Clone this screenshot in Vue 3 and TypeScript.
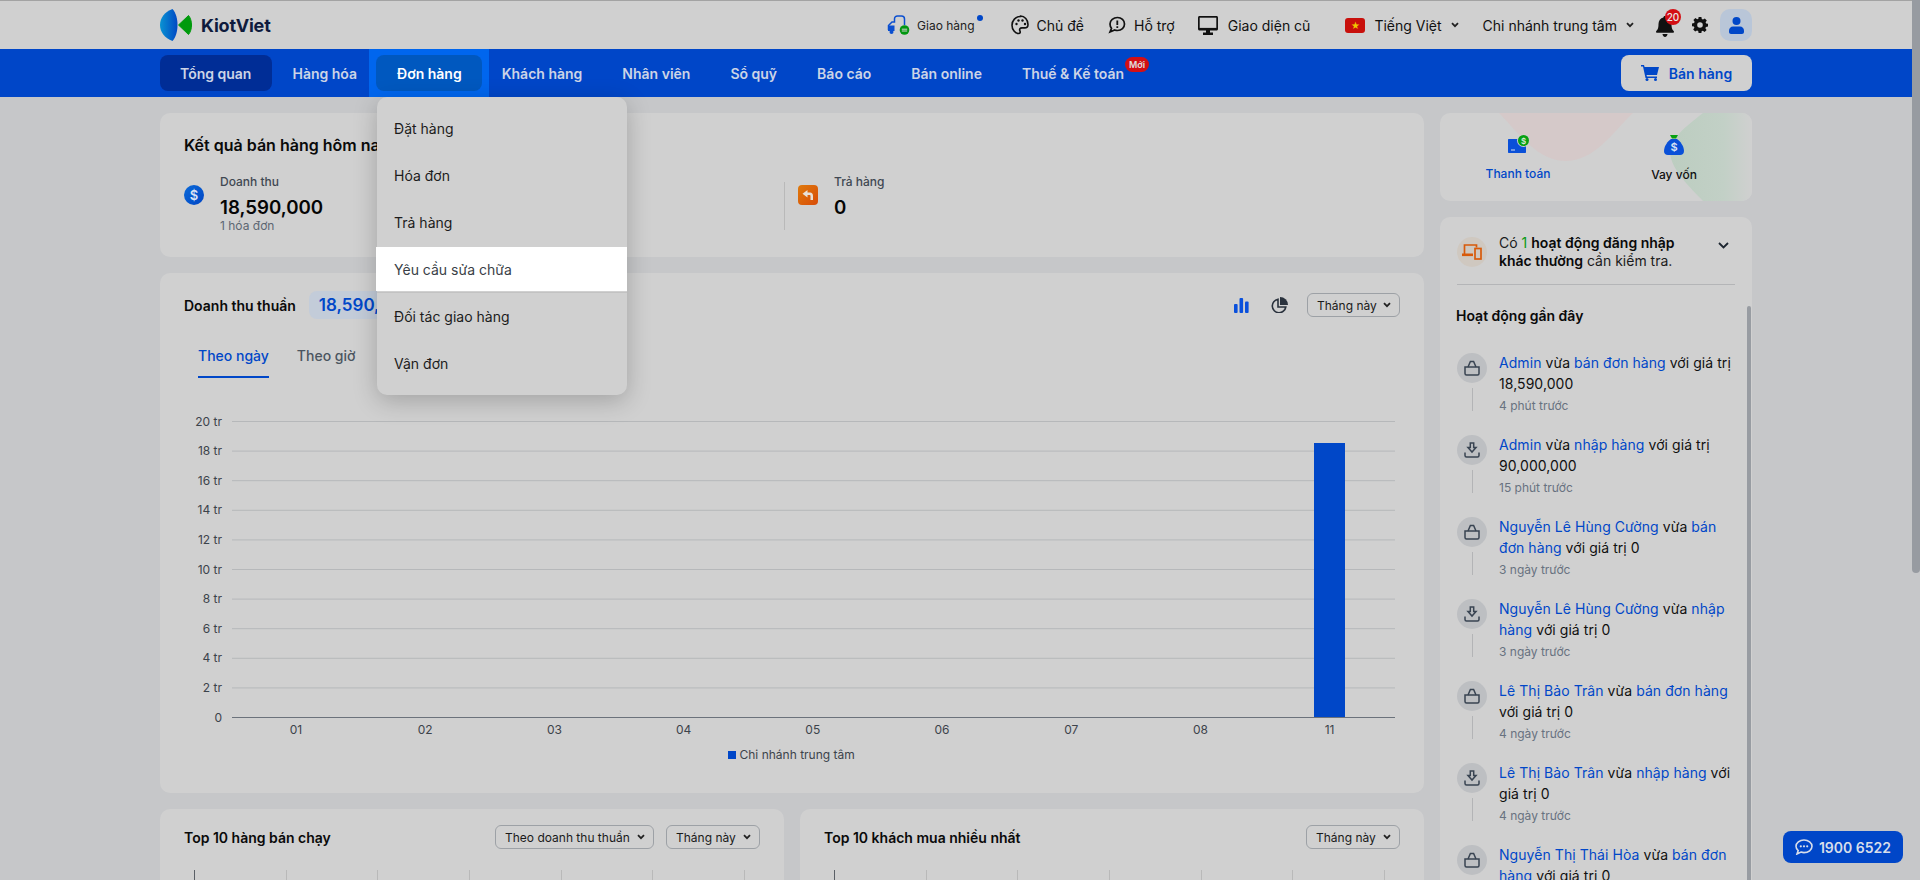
<script setup lang="ts">
interface Activity {
  name: string
  action: string
  tail: string
  value: string
  time: string
  kind: 'sell' | 'import'
}

const navItems = ['Tổng quan', 'Hàng hóa', 'Đơn hàng', 'Khách hàng', 'Nhân viên', 'Sổ quỹ', 'Báo cáo', 'Bán online', 'Thuế & Kế toán']
const menuItems = ['Đặt hàng', 'Hóa đơn', 'Trả hàng', 'Yêu cầu sửa chữa', 'Đối tác giao hàng', 'Vận đơn']

const activities: Activity[] = [
  { name: 'Admin', action: 'bán đơn hàng', tail: 'với giá trị', value: '18,590,000', time: '4 phút trước', kind: 'sell' },
  { name: 'Admin', action: 'nhập hàng', tail: 'với giá trị', value: '90,000,000', time: '15 phút trước', kind: 'import' },
  { name: 'Nguyễn Lê Hùng Cường', action: 'bán đơn hàng', tail: 'với giá trị', value: '0', time: '3 ngày trước', kind: 'sell' },
  { name: 'Nguyễn Lê Hùng Cường', action: 'nhập hàng', tail: 'với giá trị', value: '0', time: '3 ngày trước', kind: 'import' },
  { name: 'Lê Thị Bảo Trân', action: 'bán đơn hàng', tail: 'với giá trị', value: '0', time: '4 ngày trước', kind: 'sell' },
  { name: 'Lê Thị Bảo Trân', action: 'nhập hàng', tail: 'với giá trị', value: '0', time: '4 ngày trước', kind: 'import' },
  { name: 'Nguyễn Thị Thái Hòa', action: 'bán đơn hàng', tail: 'với giá trị', value: '0', time: '4 ngày trước', kind: 'sell' }
]

const yTicks = [20, 18, 16, 14, 12, 10, 8, 6, 4, 2].map((v, i) => ({ label: `${v} tr`, y: 14.5 + i * 29.6 }))
const xTicks = ['01', '02', '03', '04', '05', '06', '07', '08', '11'].map((label, i) => ({ label, x: 136 + i * 129.2 }))
const topTicks = [0, 1, 2, 3, 4, 5, 6]
</script>

<template>
  <div class="page">
    <header class="topbar">
      <div class="brand">
        <svg class="logo" viewBox="0 0 33 32" width="33" height="32">
          <defs>
            <linearGradient id="lg" x1="0" y1="0" x2="1" y2="0">
              <stop offset="0" stop-color="#0a93d2" />
              <stop offset="1" stop-color="#0048c4" />
            </linearGradient>
          </defs>
          <path d="M12.5 0C4.5 3 0 9 0 16s4.5 13 12.5 16C16 28 17.5 22 17.5 16S16 4 12.5 0Z" fill="url(#lg)" />
          <path d="M18.5 16 28.5 6.5C32.5 11 32.5 21 28.5 25.5Z" fill="#009a0c" stroke="#009a0c" stroke-linejoin="round" />
        </svg>
        <span class="brand-name">KiotViet</span>
      </div>

      <div class="tools">
        <a class="tool t-ship">
          <svg width="23" height="20" viewBox="0 0 23 20" fill="none">
            <path d="M1.500 15v-4.500L5 7h2.500V4C7.500 2.200 8.700 1 10.500 1h4C16.300 1 17.500 2.200 17.500 4v6" stroke="#0b4fd0" stroke-width="1.500" />
            <path d="M1 10.500h6.500V16H1Z" fill="#0b4fd0" />
            <circle cx="4.500" cy="17" r="2" fill="#0b4fd0" />
            <circle cx="17.500" cy="15" r="4.800" fill="#00960f" />
            <path d="M14.800 14.200h5.400M14.800 16h5.400" stroke="#d0d0d0" stroke-width="1" />
          </svg>
          <span class="ship-text">Giao hàng</span>
          <i class="ship-dot"></i>
        </a>
        <a class="tool t-theme">
          <svg width="18" height="20" viewBox="0 0 18 20" fill="none" stroke="#111" stroke-width="1.600">
            <path d="M9.500 1.500C4.500 1.500 1 5.500 1 10.200c0 4.600 3.200 8.300 6.600 8.300 1.700 0 1.900-1.400 1.300-2.600-.8-1.600.2-3 2-3h2.700c2 0 3.400-1.300 3.400-3.500 0-4.600-3.400-8.400-7.500-8.400Z" />
            <circle cx="5.500" cy="9" r="1.200" fill="#111" stroke="none" />
            <circle cx="7.500" cy="5.500" r="1.200" fill="#111" stroke="none" />
            <circle cx="11.500" cy="5.500" r="1.200" fill="#111" stroke="none" />
            <circle cx="14" cy="9" r="1.200" fill="#111" stroke="none" />
          </svg>
          <span>Chủ đề</span>
        </a>
        <a class="tool t-help">
          <svg width="18" height="18" viewBox="0 0 18 18" fill="none">
            <path d="M9.500 1.500c4 0 7 2.800 7 6.500s-3 6.500-7 6.500c-1 0-2-.2-2.800-.5L2 16l1.500-3.700C2.500 11.100 2 9.600 2 8c0-3.700 3.500-6.500 7.500-6.500Z" stroke="#111" stroke-width="1.700" />
            <path d="M9.300 4.500v4.500M9.300 10.300v1.700" stroke="#111" stroke-width="1.800" />
          </svg>
          <span>Hỗ trợ</span>
        </a>
        <a class="tool t-old">
          <svg width="20" height="19" viewBox="0 0 20 19">
            <path d="M1.500 0h17C19.300 0 20 .7 20 1.500V13c0 .8-.7 1.500-1.500 1.500h-17C.7 14.500 0 13.800 0 13V1.500C0 .7.700 0 1.500 0Z" fill="#111" />
            <path d="M1.700 1.700h16.600v10.200H1.700Z" fill="#d0d0d0" />
            <path d="M8 14h4v2.500h3V19H5v-2.500h3Z" fill="#111" />
          </svg>
          <span>Giao diện cũ</span>
        </a>
        <a class="tool t-lang">
          <span class="flag"><b>★</b></span>
          <span>Tiếng Việt</span>
          <svg class="chev" width="8" height="6" viewBox="0 0 8 6" fill="none"><path d="M1 1.200 4 4.200 7 1.200" stroke="#222" stroke-width="1.800" /></svg>
        </a>
        <a class="tool t-branch">
          <span>Chi nhánh trung tâm</span>
          <svg class="chev" width="8" height="6" viewBox="0 0 8 6" fill="none"><path d="M1 1.200 4 4.200 7 1.200" stroke="#222" stroke-width="1.800" /></svg>
        </a>
        <a class="bell">
          <svg width="18" height="21" viewBox="0 0 18 21" fill="#111">
            <path d="M9 0c1 0 1.600.7 1.600 1.600C13.600 2.300 15.500 5 15.500 8c0 4.500 1 5.800 2.200 7 .5.500.3 1.700-.7 1.700H1c-1 0-1.200-1.200-.7-1.700C1.500 13.800 2.500 12.500 2.500 8c0-3 1.900-5.700 4.900-6.400C7.400.7 8 0 9 0Z" />
            <path d="M6.500 18h5C11.500 19.500 10.300 21 9 21s-2.500-1.500-2.500-3Z" />
          </svg>
          <span class="bell-badge">20</span>
        </a>
        <a class="gear">
          <svg width="16" height="16" viewBox="0 0 16 16">
            <path fill-rule="evenodd" fill="#111" d="M6.600 0h2.800l.4 2.100 1.200.5 1.800-1.200 2 2-1.200 1.800.5 1.200L16 6.800v2.800l-2.100.4-.5 1.200 1.200 1.800-2 2-1.800-1.200-1.200.5L9.400 16H6.600l-.4-2.100-1.200-.5-1.800 1.200-2-2 1.200-1.800-.5-1.200L0 9.200V6.400l2.100-.4.500-1.200L1.400 3l2-2 1.800 1.200 1.200-.5ZM8 5.200a2.800 2.800 0 1 0 0 5.600 2.800 2.800 0 0 0 0-5.600Z" />
          </svg>
        </a>
        <a class="avatar">
          <svg width="15" height="17" viewBox="0 0 15 17" fill="#0047c8">
            <circle cx="7.500" cy="4" r="4" />
            <path d="M4 9.500h7c2.200 0 4 1.800 4 4V15c0 1.100-.9 2-2 2H2c-1.100 0-2-.9-2-2v-1.500c0-2.200 1.800-4 4-4Z" />
          </svg>
        </a>
      </div>
    </header>

    <nav class="navbar">
      <div class="nav-list">
        <div
          v-for="(item, i) in navItems"
          :key="item"
          class="nav-item"
          :class="{ 'is-home': i === 0, 'is-goods': i === 1, 'is-open': i === 2 }"
        >
          <span>{{ item }}</span>
          <em v-if="i === 8" class="new-badge">Mới</em>
          <div v-if="i === 2" class="dropdown">
            <div
              v-for="(m, j) in menuItems"
              :key="m"
              class="menu-item"
              :class="{ 'is-hover': j === 3 }"
            >{{ m }}</div>
          </div>
        </div>
      </div>
      <button class="sell-btn">
        <svg width="18" height="16" viewBox="0 0 18 16" fill="#0047c8">
          <path d="M0 0h3l.6 2H18l-2 8H5.500L6 11.500h10V13H4.500L2 1.500H0Z" />
          <circle cx="6" cy="14.500" r="1.500" />
          <circle cx="14.500" cy="14.500" r="1.500" />
        </svg>
        <span>Bán hàng</span>
      </button>
    </nav>

    <main class="content">
      <section class="left">
        <div class="card summary">
          <h2 class="summary-title">Kết quả bán hàng hôm nay</h2>
          <div class="stats">
            <div class="stat">
              <span class="stat-icon coin">$</span>
              <div>
                <div class="stat-label">Doanh thu</div>
                <div class="stat-value">18,590,000</div>
                <div class="stat-note">1 hóa đơn</div>
              </div>
            </div>
            <div class="stat stat-return">
              <span class="stat-icon back">
                <svg width="12" height="12" viewBox="0 0 12 12" fill="#e8e0d8"><path d="M5.500 1v2.500H8c2 0 3 1.500 3 3.500v4H8.500V7c0-.8-.4-1-1-1h-2v2.500L.5 4.700Z" /></svg>
              </span>
              <div>
                <div class="stat-label">Trả hàng</div>
                <div class="stat-value">0</div>
              </div>
            </div>
          </div>
        </div>

        <div class="card revenue">
          <div class="rev-head">
            <h3 class="card-title">Doanh thu thuần</h3>
            <span class="rev-pill">18,590,000</span>
            <div class="rev-actions">
              <svg width="15" height="15" viewBox="0 0 15 15" fill="#0a50dc">
                <rect x="0" y="6" width="3.600" height="9" rx="1" />
                <rect x="5.500" y="0" width="3.600" height="15" rx="1" />
                <rect x="11" y="3.500" width="3.600" height="11.500" rx="1" />
              </svg>
              <svg class="pie" width="17" height="16" viewBox="0 0 17 16" fill="none">
                <path d="M7 2.200a6.800 6.800 0 1 0 7.800 7.800H7Z" stroke="#2a323d" stroke-width="1.600" />
                <path d="M9 0a8 8 0 0 1 8 8H9Z" fill="#2a323d" />
              </svg>
              <div class="select">Tháng này<svg width="8" height="6" viewBox="0 0 8 6" fill="none"><path d="M1 1.200 4 4.200 7 1.200" stroke="#222" stroke-width="1.800" /></svg></div>
            </div>
          </div>
          <div class="tabs">
            <span class="tab active">Theo ngày</span>
            <span class="tab">Theo giờ</span>
            <span class="tab">Theo thứ</span>
          </div>
          <svg class="chart" width="1264" height="360" viewBox="0 0 1264 360">
            <g v-for="t in yTicks" :key="t.label">
              <line x1="72" :y1="t.y" x2="1235" :y2="t.y" stroke="#b6b8ba" />
              <text x="62" :y="t.y + 4" text-anchor="end" class="tick">{{ t.label }}</text>
            </g>
            <line x1="72" y1="310.500" x2="1235" y2="310.500" stroke="#6b727b" />
            <text x="62" y="314.500" text-anchor="end" class="tick">0</text>
            <rect x="1154" y="36" width="31" height="274" fill="#0047c8" />
            <text v-for="t in xTicks" :key="t.label" :x="t.x" y="327" text-anchor="middle" class="tick">{{ t.label }}</text>
            <rect x="568" y="344" width="8" height="8" fill="#0047c8" />
            <text x="579.500" y="352" class="tick">Chi nhánh trung tâm</text>
          </svg>
        </div>

        <div class="bottom-row">
          <div class="card top-card">
            <div class="top-head">
              <h3 class="card-title">Top 10 hàng bán chạy</h3>
              <div class="select wide">Theo doanh thu thuần<svg width="8" height="6" viewBox="0 0 8 6" fill="none"><path d="M1 1.200 4 4.200 7 1.200" stroke="#222" stroke-width="1.800" /></svg></div>
              <div class="select">Tháng này<svg width="8" height="6" viewBox="0 0 8 6" fill="none"><path d="M1 1.200 4 4.200 7 1.200" stroke="#222" stroke-width="1.800" /></svg></div>
            </div>
            <div class="vlines left-lines"><i v-for="n in topTicks" :key="n" :class="{ first: n === 0 }"></i></div>
          </div>
          <div class="card top-card">
            <div class="top-head">
              <h3 class="card-title">Top 10 khách mua nhiều nhất</h3>
              <div class="select">Tháng này<svg width="8" height="6" viewBox="0 0 8 6" fill="none"><path d="M1 1.200 4 4.200 7 1.200" stroke="#222" stroke-width="1.800" /></svg></div>
            </div>
            <div class="vlines right-lines"><i v-for="n in topTicks" :key="n" :class="{ first: n === 0 }"></i></div>
          </div>
        </div>
      </section>

      <aside class="side">
        <div class="card promo">
          <svg class="promo-bg" width="312" height="88" viewBox="0 0 312 88">
            <defs>
              <linearGradient id="gfade" x1="0" y1="0" x2="1" y2="0">
                <stop offset="0" stop-color="#bccdc0" />
                <stop offset=".65" stop-color="#c2d0c6" />
                <stop offset="1" stop-color="#d0d0d0" />
              </linearGradient>
            </defs>
            <path d="M59 0C80 22 98 48 125 48C155 48 172 20 193 0Z" fill="#d5c9c9" />
            <path d="M263 0C245 14 230 26 230 40C232 58 250 74 263 88H312V0Z" fill="url(#gfade)" />
          </svg>
          <div class="promo-item">
            <svg width="21" height="19" viewBox="0 0 21 19">
              <path d="M1 4h16c.6 0 1 .4 1 1v12c0 .6-.4 1-1 1H1c-.6 0-1-.4-1-1V5c0-.6.4-1 1-1Z" fill="#0a50d8" />
              <path d="M3 15h4" stroke="#d5dff0" stroke-width="1.100" />
              <circle cx="15.500" cy="5.500" r="6.500" fill="#d0d0d0" />
              <circle cx="15.500" cy="5.500" r="5.500" fill="#08a012" />
              <text x="15.500" y="8.500" text-anchor="middle" class="mini">$</text>
            </svg>
            <span class="blue">Thanh toán</span>
          </div>
          <div class="promo-item">
            <svg width="20" height="20" viewBox="0 0 20 20">
              <path d="M6 0h8L12 3.500H8Z" fill="#08a012" />
              <path d="M7 4h6c3 2 7 7 7 12 0 2.500-1.500 4-4 4H4c-2.500 0-4-1.500-4-4 0-5 4-10 7-12Z" fill="#0a50d8" />
              <text x="10" y="16" text-anchor="middle" class="mini big">$</text>
            </svg>
            <span>Vay vốn</span>
          </div>
        </div>

        <div class="card feed">
          <div class="alert">
            <span class="alert-icon">
              <svg width="20" height="16" viewBox="0 0 20 16" fill="none" stroke="#d85a0a" stroke-width="1.700">
                <path d="M2.500 10V1h12v2.500" />
                <path d="M0 10.800h11" stroke-width="2.600" />
                <rect x="13" y="4.500" width="6" height="10.500" />
              </svg>
            </span>
            <p class="alert-text">Có <span class="green">1</span> <b>hoạt động đăng nhập khác thường</b> cần kiểm tra.</p>
            <svg class="alert-chev" width="11" height="7" viewBox="0 0 11 7" fill="none"><path d="M1 1 5.500 5.500 10 1" stroke="#1c2530" stroke-width="1.800" /></svg>
          </div>
          <h3 class="card-title feed-title">Hoạt động gần đây</h3>
          <ul class="activity">
            <li v-for="(a, i) in activities" :key="i" class="act">
              <div class="act-rail">
                <span class="act-icon">
                  <svg v-if="a.kind === 'sell'" width="16" height="16" viewBox="0 0 16 16" fill="none" stroke="#394452" stroke-width="1.500">
                    <path d="M1 7h14v6.500c0 .8-.7 1.500-1.500 1.500h-11C1.700 15 1 14.300 1 13.500Z" />
                    <path d="M4 7l2.400-5.500h3.200L12 7" />
                  </svg>
                  <svg v-else width="16" height="16" viewBox="0 0 16 16" fill="none" stroke="#394452" stroke-width="1.500">
                    <path d="M1 10.500v3c0 .8.700 1.500 1.500 1.500h11c.8 0 1.500-.7 1.500-1.500v-3" />
                    <path d="M6.300 1h3.400v4.500h2.300L8 10 4 5.500h2.300Z" />
                  </svg>
                </span>
                <i v-if="i < activities.length - 1" class="act-line"></i>
              </div>
              <div class="act-body">
                <p class="act-text"><a>{{ a.name }}</a> vừa <a>{{ a.action }}</a> {{ a.tail }} {{ a.value }}</p>
                <time class="act-time">{{ a.time }}</time>
              </div>
            </li>
          </ul>
          <i class="feed-scroll"></i>
        </div>
      </aside>
    </main>

    <a class="hotline">
      <svg width="18" height="16" viewBox="0 0 18 16" fill="none">
        <path d="M9 1c4.400 0 8 2.800 8 6.300s-3.600 6.300-8 6.300c-1.100 0-2.100-.2-3-.5L2 15l1.200-3.400C1.800 10.500 1 9 1 7.300 1 3.800 4.600 1 9 1Z" stroke="#d8deea" stroke-width="1.600" />
        <circle cx="5.800" cy="7.300" r="1.100" fill="#d8deea" />
        <circle cx="9" cy="7.300" r="1.100" fill="#d8deea" />
        <circle cx="12.200" cy="7.300" r="1.100" fill="#d8deea" />
      </svg>
      <span>1900 6522</span>
    </a>

    <i class="page-scroll"></i>
  </div>
</template>

<style>
html, body { margin: 0; overflow: hidden; background: #c6c7c9; }
</style>

<style scoped>
.page {
  position: relative;
  width: 1920px;
  height: 880px;
  overflow: hidden;
  background: #c6c7c9;
  font-family: Inter, "Noto Sans", sans-serif;
  font-size: 14px;
  color: #111;
}
p, h2, h3, ul { margin: 0; padding: 0; }
i, em { font-style: normal; }
.blue { color: #0047c8; }

/* top bar */
.topbar {
  display: flex;
  align-items: center;
  height: 48px;
  padding: 0 168px 0 160px;
  background: #d0d0d0;
  border-top: 1px solid #a3a3a3;
  box-sizing: content-box;
}
.brand { display: flex; align-items: center; gap: 8px; }
.brand-name { font-size: 18px; font-weight: 700; color: #0f1b3d; letter-spacing: -0.2px; }
.tools { display: flex; align-items: center; margin-left: auto; }
.tool { display: flex; align-items: center; gap: 8px; color: #111; white-space: nowrap; }
.t-ship { position: relative; gap: 7px; }
.ship-text { font-size: 12px; color: #222; }
.ship-dot { width: 6px; height: 6px; border-radius: 50%; background: #0047c8; margin: -14px 0 0 -5px; }
.t-theme { margin-left: 28px; }
.t-help { margin-left: 24px; }
.t-old { margin-left: 23px; gap: 10px; }
.t-lang { margin-left: 35px; }
.t-branch { margin-left: 24px; }
.chev { flex: none; }
.t-lang .chev, .t-branch .chev { margin-left: 1px; }
.flag {
  display: flex;
  align-items: center;
  justify-content: center;
  width: 20px;
  height: 15px;
  border-radius: 3px;
  background: #c8100c;
  margin-right: 1px;
}
.flag b { font-size: 9px; line-height: 1; color: #f0c800; font-weight: 400; }
.bell { position: relative; display: flex; margin-left: 22px; margin-top: 3px; }
.bell-badge {
  position: absolute;
  left: 9px;
  top: -7px;
  width: 16px;
  height: 16px;
  border-radius: 50%;
  background: #d40f14;
  color: #e8e8e8;
  font-size: 10px;
  font-weight: 500;
  line-height: 16px;
  text-align: center;
}
.gear { display: flex; margin-left: 18px; }
.avatar {
  display: flex;
  align-items: center;
  justify-content: center;
  width: 32px;
  height: 32px;
  margin-left: 12px;
  border-radius: 10px;
  background: #b9c6d8;
}

/* nav */
.navbar {
  display: flex;
  align-items: center;
  justify-content: space-between;
  height: 48px;
  padding: 0 168px 0 160px;
  background: #0046c8;
}
.nav-list { display: flex; height: 36px; }
.nav-item {
  position: relative;
  display: flex;
  align-items: center;
  padding: 0 20px;
  border-radius: 8px;
  color: #ccd4e6;
  font-weight: 600;
  white-space: nowrap;
}
.nav-item.is-home { background: #002d96; padding-right: 21px; }
.nav-item.is-goods { padding-right: 19px; }
.nav-item.is-open { background: #0058bf; color: #fff; padding-left: 21px; z-index: 1; }
.nav-item.is-open::before {
  content: "";
  position: absolute;
  inset: -6px -7px;
  background: #0066ee;
  z-index: -1;
}
.nav-item.is-open::after {
  content: "";
  position: absolute;
  inset: 0;
  border-radius: 8px;
  background: #0058bf;
  z-index: -1;
}
.new-badge {
  position: absolute;
  left: 100%;
  top: 2px;
  margin-left: -19px;
  width: 24px;
  height: 15px;
  border-radius: 8px;
  background: #d40f14;
  color: #e0e0e0;
  font-size: 9px;
  font-weight: 600;
  line-height: 15px;
  text-align: center;
}
.dropdown {
  position: absolute;
  left: 1px;
  top: 42px;
  width: 250px;
  height: 298px;
  padding: 8px 0 0;
  box-sizing: border-box;
  background: #d0d0d0;
  border-radius: 10px;
  box-shadow: 0 6px 24px rgba(0, 0, 0, 0.22);
  z-index: 10;
}
.menu-item {
  display: flex;
  align-items: center;
  height: 47px;
  padding: 0 17px;
  color: #1c1c1c;
  font-weight: 400;
}
.menu-item.is-hover {
  height: 44px;
  margin: 1px 0 0 -1px;
  padding-left: 18px;
  background: #fff;
  color: #3a3f47;
}
.menu-item.is-hover + .menu-item {
  height: 48px;
  margin-top: 1px;
  border-top: 1px solid #c2c2c2;
  box-sizing: border-box;
}
.sell-btn {
  display: flex;
  align-items: center;
  justify-content: center;
  gap: 10px;
  width: 131px;
  height: 36px;
  border: 0;
  border-radius: 8px;
  background: #d0d0d0;
  color: #0047c8;
  font: 600 14px Inter, sans-serif;
}

/* layout */
.content {
  display: grid;
  grid-template-columns: 1264px 312px;
  gap: 16px;
  padding: 16px 168px 0 160px;
}
.left { display: flex; flex-direction: column; gap: 16px; }
.side { display: flex; flex-direction: column; gap: 16px; }
.card {
  position: relative;
  background: #d0d0d0;
  border-radius: 10px;
  box-sizing: border-box;
}
.card-title { font-size: 14px; font-weight: 600; color: #0a0a0a; }

/* summary */
.summary { height: 144px; padding: 22px 24px 0; }
.summary-title { font-size: 16px; font-weight: 600; line-height: 20px; color: #0a0a0a; }
.stats { display: flex; margin-top: 20px; }
.stat { position: relative; display: flex; align-items: flex-start; gap: 16px; width: 600px; height: 48px; }
.stat-return { padding-left: 14px; box-sizing: border-box; }
.stat-return::before {
  content: "";
  position: absolute;
  left: 0;
  top: 7px;
  width: 1px;
  height: 48px;
  background: #b9b9b9;
}
.stat-icon {
  flex: none;
  display: flex;
  align-items: center;
  justify-content: center;
  width: 20px;
  height: 20px;
  margin-top: 10px;
  color: #d8e2f4;
  font-size: 13px;
  font-weight: 600;
}
.coin { border-radius: 50%; background: linear-gradient(135deg, #0b6ad8, #0045c4); }
.back { border-radius: 4px; background: linear-gradient(135deg, #df7a0c, #d84c08); }
.stat-label { font-size: 12px; font-weight: 500; line-height: 14px; color: #404852; }
.stat-value { margin-top: 9px; font-size: 18.7px; font-weight: 600; line-height: 20px; color: #050505; }
.stat-note { font-size: 12px; line-height: 14px; margin-top: 1px; color: #5d6772; }

/* revenue */
.revenue { height: 520px; padding: 18px 24px 0; }
.rev-head { display: flex; align-items: center; height: 28px; }
.rev-pill {
  margin-left: 13px;
  padding: 0 10px;
  height: 28px;
  border-radius: 8px;
  background: #c3ccd9;
  color: #0047c8;
  font-size: 17px;
  font-weight: 600;
  line-height: 28px;
}
.rev-actions { display: flex; align-items: center; margin-left: auto; }
.pie { margin: 0 19px 0 22px; }
.select {
  flex: none;
  display: flex;
  align-items: center;
  justify-content: space-between;
  height: 24px;
  width: 93px;
  padding: 0 8px 0 9px;
  box-sizing: border-box;
  border: 1px solid #9da1a6;
  border-radius: 6px;
  font-size: 12px;
  color: #1a1a1a;
}
.tabs { display: flex; gap: 28px; margin-top: 21px; padding-left: 14px; }
.tab { padding: 6px 0 10px; font-weight: 500; line-height: 20px; color: #4b5560; border-bottom: 2px solid transparent; }
.tab.active { color: #0047c8; border-bottom-color: #0047c8; }
.chart { display: block; position: absolute; left: 0; top: 134px; }
.tick { font: 12px Inter, sans-serif; fill: #3c434b; }

/* bottom */
.bottom-row { display: grid; grid-template-columns: 624px 624px; gap: 16px; }
.top-card { height: 200px; padding: 16px 24px 0; overflow: hidden; }
.top-head { display: flex; align-items: center; height: 24px; gap: 12px; }
.top-head .card-title { margin-right: auto; }
.top-head .select { width: 94px; }
.top-head .select.wide { width: 159px; }
.vlines { position: absolute; top: 61px; display: flex; gap: 90.700px; }
.left-lines { left: 34px; }
.right-lines { left: 34px; }
.vlines i { width: 1px; height: 30px; background: #b9b9b9; }
.vlines i.first { background: #5a5f66; }

/* promo */
.promo {
  display: grid;
  grid-template-columns: 1fr 1fr;
  height: 88px;
  overflow: hidden;
}
.promo-bg { position: absolute; left: 0; top: 0; }
.promo-item {
  position: relative;
  display: flex;
  flex-direction: column;
  align-items: center;
  gap: 11px;
  padding-top: 22px;
  font-size: 12px;
  font-weight: 500;
  line-height: 18px;
  color: #111;
}
.mini { font: 600 8px Inter, sans-serif; fill: #d8e8d8; }
.mini.big { font-size: 11px; fill: #d8e2f4; }

/* feed */
.feed { height: 700px; padding: 0 17px 0 16px; overflow: hidden; }
.alert {
  position: relative;
  display: flex;
  align-items: center;
  height: 67px;
  margin: 0 0 0 1px;
  border-bottom: 1px solid #b4b5b7;
  box-sizing: content-box;
  padding-right: 0;
}
.alert-icon {
  flex: none;
  display: flex;
  align-items: center;
  justify-content: center;
  width: 30px;
  height: 30px;
  border-radius: 50%;
  background: #cfc8c0;
  margin: 3px 12px 0 0;
}
.alert-text { width: 190px; line-height: 18px; margin-top: 3px; color: #1c1c1c; }
.alert-text b { font-weight: 600; color: #0a0a0a; }
.green { color: #089a12; }
.alert-chev { position: absolute; left: 261px; top: 25px; }
.feed-title { margin-top: 21px; line-height: 20px; }
.activity { list-style: none; margin-top: 27px; }
.act { display: flex; gap: 12px; height: 82px; margin-left: 1px; }
.act-rail { flex: none; display: flex; flex-direction: column; align-items: center; width: 30px; }
.act-icon {
  display: flex;
  align-items: center;
  justify-content: center;
  width: 30px;
  height: 30px;
  border-radius: 50%;
  background: #bdbfc2;
}
.act-line { width: 1px; height: 23px; margin-top: 5px; background: #b3b4b6; }
.act-body { width: 238px; }
.act-text { line-height: 21px; color: #111; letter-spacing: 0.06px; margin-top: -1px; }
.act-text a { color: #0047c8; }
.act-time { display: block; margin-top: 3px; font-size: 12px; line-height: 18px; color: #687280; }
.feed-scroll {
  position: absolute;
  right: 1px;
  top: 89px;
  bottom: 0;
  width: 4px;
  border-radius: 2px;
  background: #989ca2;
}

/* floating */
.hotline {
  position: absolute;
  left: 1783px;
  top: 831px;
  display: flex;
  align-items: center;
  justify-content: center;
  gap: 6px;
  width: 120px;
  height: 32px;
  border-radius: 8px;
  background: #0046c8;
  color: #d8deea;
  font-weight: 600;
}
.page-scroll {
  position: absolute;
  right: 0;
  top: 0;
  width: 8px;
  height: 573px;
  border-radius: 0 0 4px 4px;
  background: #979ba1;
  z-index: 20;
}
</style>
